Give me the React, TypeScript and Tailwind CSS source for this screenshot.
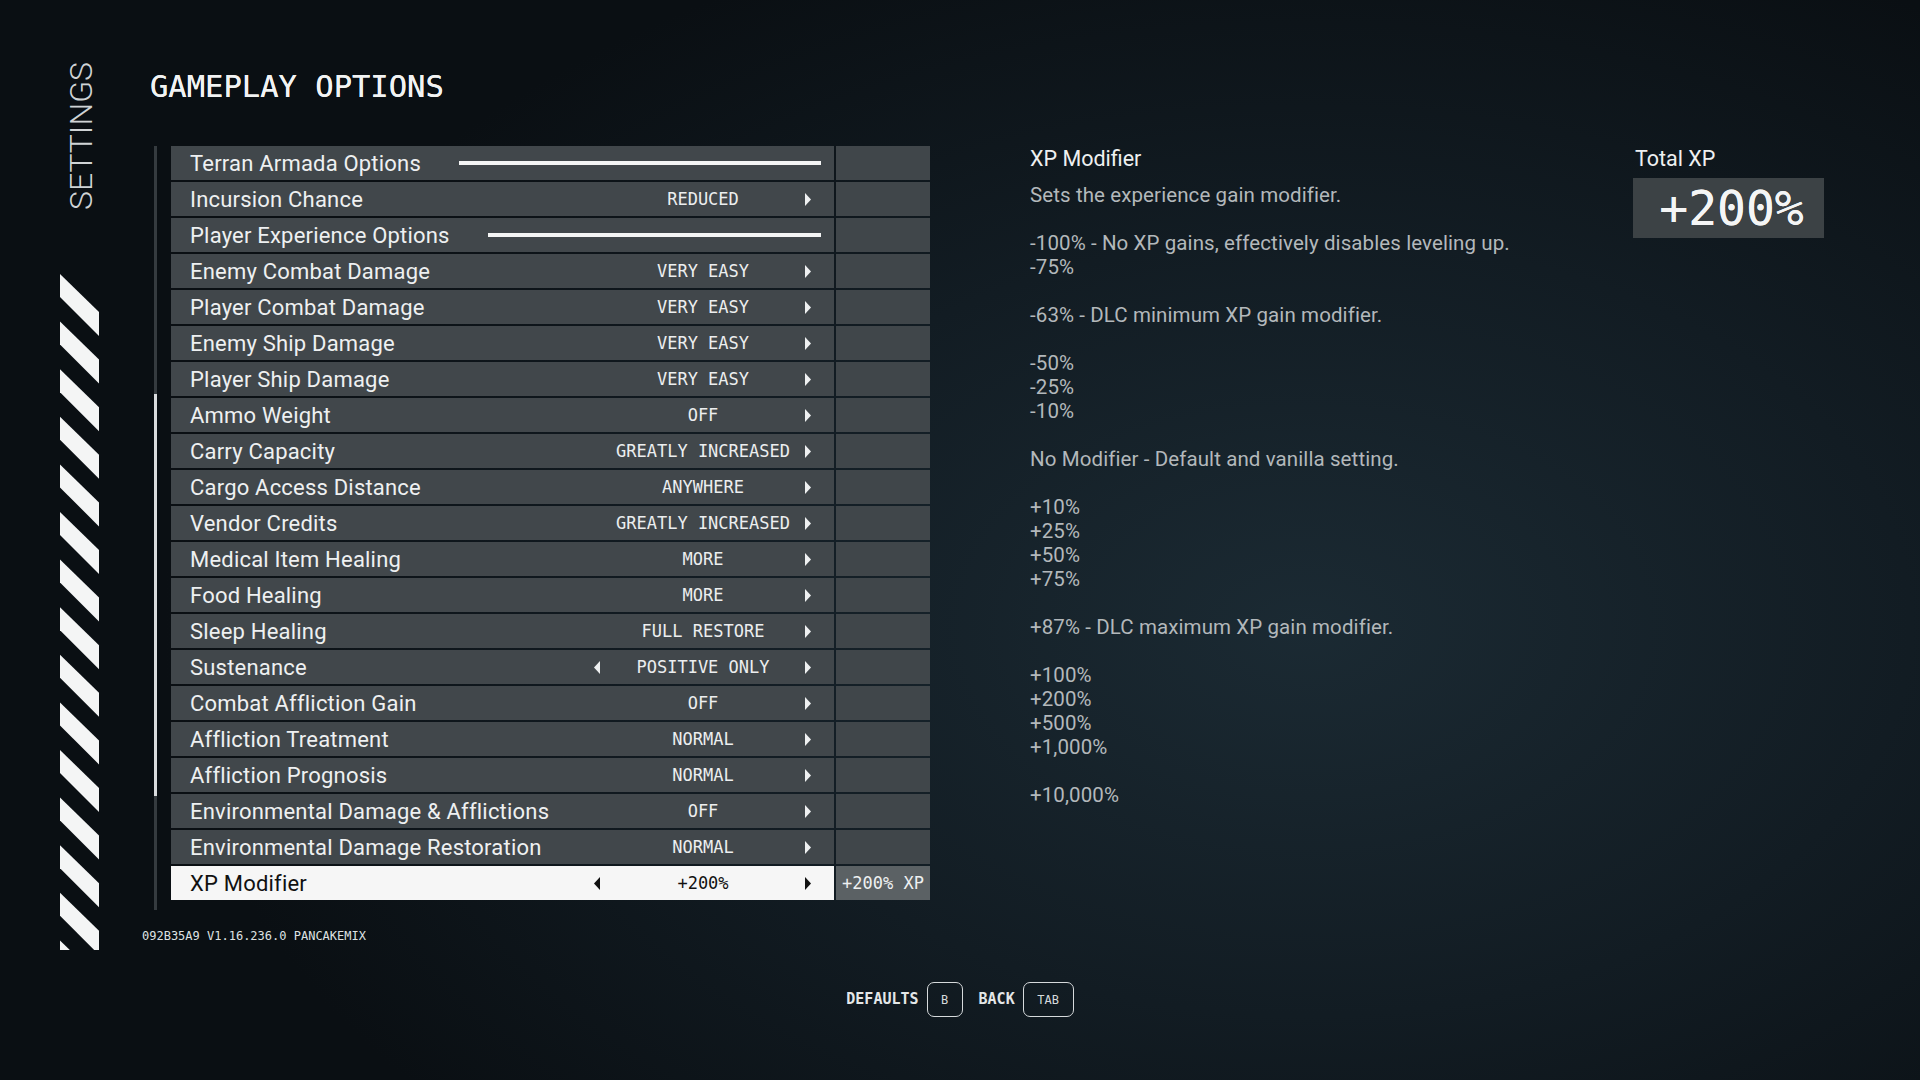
import React from "react";

type Row = {
  label: string;
  value?: string;
  header?: boolean;
  left?: boolean;
  selected?: boolean;
  side?: string;
};

const rows: Row[] = [
  { label: "Terran Armada Options", header: true },
  { label: "Incursion Chance", value: "REDUCED" },
  { label: "Player Experience Options", header: true },
  { label: "Enemy Combat Damage", value: "VERY EASY" },
  { label: "Player Combat Damage", value: "VERY EASY" },
  { label: "Enemy Ship Damage", value: "VERY EASY" },
  { label: "Player Ship Damage", value: "VERY EASY" },
  { label: "Ammo Weight", value: "OFF" },
  { label: "Carry Capacity", value: "GREATLY INCREASED" },
  { label: "Cargo Access Distance", value: "ANYWHERE" },
  { label: "Vendor Credits", value: "GREATLY INCREASED" },
  { label: "Medical Item Healing", value: "MORE" },
  { label: "Food Healing", value: "MORE" },
  { label: "Sleep Healing", value: "FULL RESTORE" },
  { label: "Sustenance", value: "POSITIVE ONLY", left: true },
  { label: "Combat Affliction Gain", value: "OFF" },
  { label: "Affliction Treatment", value: "NORMAL" },
  { label: "Affliction Prognosis", value: "NORMAL" },
  { label: "Environmental Damage & Afflictions", value: "OFF" },
  { label: "Environmental Damage Restoration", value: "NORMAL" },
  { label: "XP Modifier", value: "+200%", left: true, selected: true, side: "+200% XP" },
];

const description: string[] = [
  "Sets the experience gain modifier.",
  "",
  "-100% - No XP gains, effectively disables leveling up.",
  "-75%",
  "",
  "-63% - DLC minimum XP gain modifier.",
  "",
  "-50%",
  "-25%",
  "-10%",
  "",
  "No Modifier - Default and vanilla setting.",
  "",
  "+10%",
  "+25%",
  "+50%",
  "+75%",
  "",
  "+87% - DLC maximum XP gain modifier.",
  "",
  "+100%",
  "+200%",
  "+500%",
  "+1,000%",
  "",
  "+10,000%",
];

function Arrow({ dir, dark }: { dir: "left" | "right"; dark?: boolean }) {
  const pts = dir === "right" ? "0,0 6,6.5 0,13" : "6,0 0,6.5 6,13";
  return (
    <svg width="7" height="13" viewBox="0 0 7 13" className="shrink-0">
      <polygon points={pts} fill={dark ? "#111111" : "#eef0f1"} />
    </svg>
  );
}

function Stripes() {
  const items = Array.from({ length: 15 }, (_, i) => i * 47.6);
  return (
    <svg width="39" height="676" viewBox="0 0 39 676" className="block">
      {items.map((y, i) => (
        <polygon
          key={i}
          points={`0,${y} 39,${y + 38} 39,${y + 62} 0,${y + 23}`}
          fill="#f4f5f5"
        />
      ))}
    </svg>
  );
}

function OptionRow({ row }: { row: Row }) {
  const sel = !!row.selected;
  return (
    <div className="flex gap-[2px] h-[34px]">
      <div
        className={
          "w-[663px] h-full flex items-center pl-[19px] pr-[22px] " +
          (sel ? "bg-[#f6f6f6]" : "bg-[#41474b]")
        }
      >
        <span
          className={
            "pt-[2px] text-[22px] tracking-[0.2px] whitespace-nowrap leading-none " +
            (sel ? "text-[#111111]" : "text-[#eef0f1]")
          }
        >
          {row.label}
        </span>
        {row.header ? (
          <div className="flex-1 flex justify-end">
            <div className="h-[4px] flex-1 ml-[38px] mr-[-9px] bg-[#f4f5f5]" />
          </div>
        ) : (
          <>
            <div className="flex-1" />
            <div className="w-[218px] flex items-center">
              <div className="w-[7px] flex">
                {row.left && <Arrow dir="left" dark={sel} />}
              </div>
              <span
                className={
                  "flex-1 text-center font-['DejaVu_Sans_Mono','Liberation_Mono',monospace] text-[17px] leading-none whitespace-nowrap " +
                  (sel ? "text-[#111111]" : "text-[#eceeef]")
                }
              >
                {row.value}
              </span>
              <Arrow dir="right" dark={sel} />
            </div>
          </>
        )}
      </div>
      <div
        className={
          "w-[94px] h-full flex items-center justify-center " +
          (sel ? "bg-[#5b6164]" : "bg-[#40464a]")
        }
      >
        {row.side && (
          <span className="font-['DejaVu_Sans_Mono','Liberation_Mono',monospace] text-[17px] leading-none text-[#eef0f1] whitespace-nowrap">
            {row.side}
          </span>
        )}
      </div>
    </div>
  );
}

function KeyCap({ label, width }: { label: string; width: string }) {
  return (
    <div
      className={
        "h-[35px] rounded-[7px] border-[1.5px] border-[#d6dadc] flex items-center justify-center " +
        width
      }
    >
      <span className="font-['DejaVu_Sans_Mono','Liberation_Mono',monospace] text-[12px] text-[#d6dadc] leading-none">
        {label}
      </span>
    </div>
  );
}

export default function App() {
  return (
    <div className="w-[1920px] h-[1080px] overflow-hidden flex flex-col bg-[radial-gradient(ellipse_70%_80%_at_68%_58%,#1b2a33_0%,#121c23_45%,#0a0f13_85%)] font-['Roboto','Noto_Sans',sans-serif] text-[#eef0f1]">
      <div className="flex h-[975px]">
        {/* side rail */}
        <aside className="w-[142px] shrink-0 pl-[60px] pt-[63px] flex flex-col">
          <div className="ml-[8px] h-[146px] w-[26px] flex items-center justify-center">
            <span className="[writing-mode:vertical-rl] rotate-180 text-[32px] font-light leading-none text-[#cfd3d5] whitespace-nowrap">
              SETTINGS
            </span>
          </div>
          <div className="mt-[65px]">
            <Stripes />
          </div>
        </aside>

        {/* options list */}
        <section className="w-[790px] shrink-0 flex flex-col">
          <h1 className="ml-[8px] mt-[72px] h-[31px] font-['DejaVu_Sans_Mono','Liberation_Mono',monospace] text-[30.5px] leading-none text-[#f2f3f3] whitespace-nowrap [text-shadow:0_0_0.4px_#f2f3f3]">
            GAMEPLAY OPTIONS
          </h1>
          <div className="mt-[43px] flex">
            <div className="ml-[12px] w-[3px] h-[764px] bg-[#353b3f] flex flex-col">
              <div className="h-[248px]" />
              <div className="h-[402px] bg-[#d9dcde]" />
            </div>
            <div className="ml-[14px] flex flex-col gap-[2px]">
              {rows.map((r) => (
                <OptionRow key={r.label} row={r} />
              ))}
            </div>
          </div>
          <div className="mt-[20px] font-['DejaVu_Sans_Mono','Liberation_Mono',monospace] text-[12px] leading-none text-[#dfe2e3] whitespace-nowrap">
            092B35A9 V1.16.236.0 PANCAKEMIX
          </div>
        </section>

        {/* description */}
        <section className="ml-[98px] w-[580px] shrink-0 pt-[147px]">
          <div className="text-[21.5px] leading-[24px] text-[#eef0f1]">XP Modifier</div>
          <div className="mt-[12px] text-[20.5px] tracking-[0.1px] leading-[24px] text-[#b3b8bb]">
            {description.map((line, i) => (
              <div key={i} className="h-[24px] whitespace-nowrap">
                {line}
              </div>
            ))}
          </div>
        </section>

        {/* total xp */}
        <section className="ml-[23px] pt-[147px] flex flex-col">
          <div className="ml-[2px] text-[21.5px] leading-[24px] text-[#eef0f1]">Total XP</div>
          <div className="mt-[7px] w-[191px] h-[60px] bg-[#3c4245] flex items-center justify-center">
            <span className="font-['DejaVu_Sans_Mono','Liberation_Mono',monospace] text-[48px] leading-none text-[#f4f5f5] pl-[6px] [text-shadow:0_0_0.6px_#f4f5f5]">
              +200%
            </span>
          </div>
        </section>
      </div>

      {/* button hints */}
      <footer className="mt-[7px] flex justify-center items-center">
        <span className="font-['DejaVu_Sans_Mono','Liberation_Mono',monospace] text-[15px] font-bold leading-none text-[#e4e7e8] mr-[8px]">
          DEFAULTS
        </span>
        <KeyCap label="B" width="w-[36px]" />
        <span className="ml-[16px] mr-[8px] font-['DejaVu_Sans_Mono','Liberation_Mono',monospace] text-[15px] font-bold leading-none text-[#e4e7e8]">
          BACK
        </span>
        <KeyCap label="TAB" width="w-[51px]" />
      </footer>
    </div>
  );
}
